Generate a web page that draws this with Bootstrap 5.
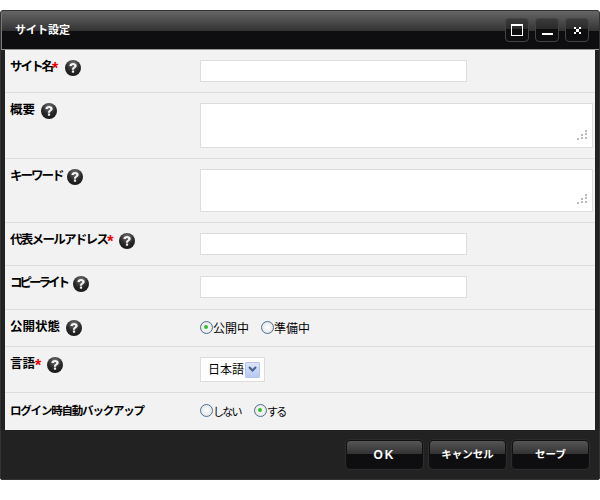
<!DOCTYPE html>
<html lang="ja">
<head>
<meta charset="utf-8">
<link rel="stylesheet" href="https://cdn.jsdelivr.net/npm/bootstrap@5.3.0/dist/css/bootstrap.min.css">
<style>
html,body{background:#fff;height:100%;overflow:hidden}
body{font-family:"Liberation Sans","Noto Sans CJK JP",sans-serif;font-size:12px;color:#000;padding-top:10px}
.dlg{width:600px;height:470px;background:#222;border:1px solid #333;border-radius:3px 3px 2px 2px;display:flex;flex-direction:column;overflow:hidden}
.dlg-head{height:39px;flex:none;background:linear-gradient(#666 0,#333 52%,#0e0e10 52%,#0e0e10 100%);border-bottom:1px solid #999;border-left:1px solid #777;padding:0 10px 2px 13px}
.dlg-title{color:#fff;font-weight:700;font-size:11px;line-height:1;padding-top:2px}
.win-set{gap:6px;padding-top:2px}
.win-btn{width:24px;height:24px;background:linear-gradient(#3a3a3a 0,#2a2a2a 45%,#0e0e10 45%);border:1px solid #444;border-radius:4px;padding:0;display:flex;align-items:center;justify-content:center}
.dlg-body{flex:1 1 auto;background:#f2f2f2;margin:0 4px 0 4px}
.frow{border-bottom:1px solid #ddd;padding:10px 0 0 5px}
.flabel{width:190px;flex:none;font-weight:700;font-size:12.5px;line-height:16px;white-space:nowrap}
.flabel-sm{font-size:11.5px;letter-spacing:-1.2px;line-height:15px;padding-top:1px}
.ltxt{position:relative;top:-1px}
.kn2{letter-spacing:-2px;margin-right:1px}
.kn-kw{letter-spacing:-2px;margin-right:-2px}
.kn17{letter-spacing:-1.700px}
.kn3{letter-spacing:-3px}
.req{color:#e00;font-weight:700;font-size:16px;line-height:0;display:inline-block;width:6px;vertical-align:-3px;letter-spacing:0}
.hlp{display:inline-block;vertical-align:-4px;margin-left:6px}
.fin{display:block;background:#fff;border:1px solid #ddd;border-radius:0;padding:2px 4px;outline:0;font-size:12px}
.fin-s{width:267px;height:22px}
.fin-l{width:393px;resize:none;height:100%}
.ta-wrap{width:393px;position:relative}
.h-45{height:45px}.h-43{height:43px}
.grip{position:absolute;right:6px;bottom:7px}
.h-r1{height:43px}.h-r2{height:66px}.h-r3{height:64px}.h-r4{height:43px}.h-r5{height:44px}.h-r6{height:37px}.h-r7{height:46px}
.radio-set{font-size:12px;line-height:14px;gap:12px;white-space:nowrap;padding-top:1px}
.radio-thin{gap:13px;font-size:11px;letter-spacing:-1.700px;padding-top:1px}
.rd{display:inline-block;width:13px;height:13px;border:1.500px solid #4a7196;border-radius:50%;background:radial-gradient(#fff,#ddd);vertical-align:-1px;position:relative}
.rd.on::after{content:"";position:absolute;left:3px;top:3px;width:4px;height:4px;background:#2fc02f;border-radius:50%}
.sel-box{width:65px;height:25px;background:#fff;border:1px solid #ddd;padding-left:7px;font-size:12px}
.sel-arr{width:15px;height:16px;background:linear-gradient(#dbe5fb,#b7c9f3);border:1px solid #b6c6ea;border-radius:1px;margin-left:1px}
.dlg-foot{flex:none;height:49px;padding:10px 10px 0 0;gap:6px}
.act{width:77px;height:29px;padding:0;background:linear-gradient(#555 0,#333 48%,#0e0e10 48%);border:1px solid #111;border-radius:4px;color:#fff;font-weight:700;font-size:10.500px;box-shadow:0 0 0 1px #2c2c2c}
.act:hover{color:#fff}
.act-wide{font-size:12px;letter-spacing:2px}
</style>
</head>
<body>
<div class="dlg">
  <div class="dlg-head d-flex align-items-center justify-content-between">
    <span class="dlg-title">サイト設定</span>
    <div class="d-flex win-set">
      <button class="win-btn" type="button" aria-label="最大化"><svg width="12" height="12" viewBox="0 0 12 12" shape-rendering="crispEdges"><rect x="0.5" y="0.5" width="11" height="11" fill="none" stroke="#fff"/><rect x="0" y="0" width="12" height="1.5" fill="#fff"/></svg></button>
      <button class="win-btn" type="button" aria-label="最小化"><svg width="12" height="12" viewBox="0 0 12 12" shape-rendering="crispEdges"><rect x="0.5" y="9" width="11" height="2" fill="#fff"/></svg></button>
      <button class="win-btn" type="button" aria-label="閉じる"><svg width="7" height="7" viewBox="0 0 7 7" shape-rendering="crispEdges"><path fill="#fff" d="M0 0h2v2H0zM5 0h2v2H5zM2 2h3v3H2zM0 5h2v2H0zM5 5h2v2H5z"/></svg></button>
    </div>
  </div>
  <svg width="0" height="0" class="d-block" aria-hidden="true"><defs>
    <radialGradient id="hg" cx=".5" cy=".25" r=".85"><stop offset="0" stop-color="#777"/><stop offset=".5" stop-color="#2a2a2a"/><stop offset="1" stop-color="#111"/></radialGradient>
    <symbol id="hq" viewBox="0 0 16 16"><circle cx="8" cy="8" r="8" fill="url(#hg)"/><path d="M4.4 6c0-2 1.6-3 3.7-3s3.6 1 3.6 2.800c0 2.300-2.600 2.200-2.600 3.900H6.900c0-2.700 2.300-2.600 2.300-3.800 0-.6-.4-1-1.100-1-.9 0-1.200.5-1.200 1.100z" fill="#f2f2f2"/><rect x="6.900" y="10.500" width="2.200" height="2.200" fill="#f2f2f2"/></symbol>
    <symbol id="gr" viewBox="0 0 11 11"><path fill="#bbb" d="M9 0h2v2H9zM9 3h2v2H9zM5 4h2v2H5zM9 7h2v2H9zM5 7h2v2H5zM1 8h2v2H1z"/></symbol>
  </defs></svg>
  <div class="dlg-body">
    <div class="frow h-r1 d-flex">
      <div class="flabel"><span class="ltxt kn2">サイト名<span class="req">*</span></span><svg class="hlp" width="16" height="16"><use href="#hq"/></svg></div>
      <input class="fin fin-s" type="text" aria-label="サイト名">
    </div>
    <div class="frow h-r2 d-flex">
      <div class="flabel"><span class="ltxt">概要</span><svg class="hlp" width="16" height="16"><use href="#hq"/></svg></div>
      <div class="ta-wrap h-45"><textarea class="fin fin-l" aria-label="概要"></textarea><svg class="grip" width="11" height="11"><use href="#gr"/></svg></div>
    </div>
    <div class="frow h-r3 d-flex">
      <div class="flabel"><span class="ltxt kn-kw">キーワード</span><svg class="hlp" width="16" height="16"><use href="#hq"/></svg></div>
      <div class="ta-wrap h-43"><textarea class="fin fin-l" aria-label="キーワード"></textarea><svg class="grip" width="11" height="11"><use href="#gr"/></svg></div>
    </div>
    <div class="frow h-r4 d-flex">
      <div class="flabel"><span class="ltxt kn17">代表メールアドレス<span class="req">*</span></span><svg class="hlp" width="16" height="16"><use href="#hq"/></svg></div>
      <input class="fin fin-s" type="text" aria-label="代表メールアドレス">
    </div>
    <div class="frow h-r5 d-flex">
      <div class="flabel"><span class="ltxt kn3">コピーライト</span><svg class="hlp" width="16" height="16"><use href="#hq"/></svg></div>
      <input class="fin fin-s" type="text" aria-label="コピーライト">
    </div>
    <div class="frow h-r6 d-flex">
      <div class="flabel"><span class="ltxt">公開状態</span><svg class="hlp" width="16" height="16"><use href="#hq"/></svg></div>
      <div class="radio-set d-flex"><span><i class="rd on"></i>公開中</span><span><i class="rd"></i>準備中</span></div>
    </div>
    <div class="frow h-r7 d-flex">
      <div class="flabel"><span class="ltxt">言語<span class="req">*</span></span><svg class="hlp" width="16" height="16"><use href="#hq"/></svg></div>
      <div class="sel-box d-flex align-items-center">日本語<span class="sel-arr d-flex align-items-center justify-content-center"><svg width="9" height="7" viewBox="0 0 9 7"><path d="M1 1l3.500 3.500L8 1" fill="none" stroke="#4a6288" stroke-width="2"/></svg></span></div>
    </div>
    <div class="frow d-flex border-0">
      <div class="flabel flabel-sm">ログイン時自動バックアップ</div>
      <div class="radio-set radio-thin d-flex"><span><i class="rd"></i>しない</span><span><i class="rd on"></i>する</span></div>
    </div>
  </div>
  <div class="dlg-foot d-flex justify-content-end">
    <button class="btn act act-wide" type="button">OK</button>
    <button class="btn act" type="button">キャンセル</button>
    <button class="btn act" type="button">セーブ</button>
  </div>
</div>
</body>
</html>
